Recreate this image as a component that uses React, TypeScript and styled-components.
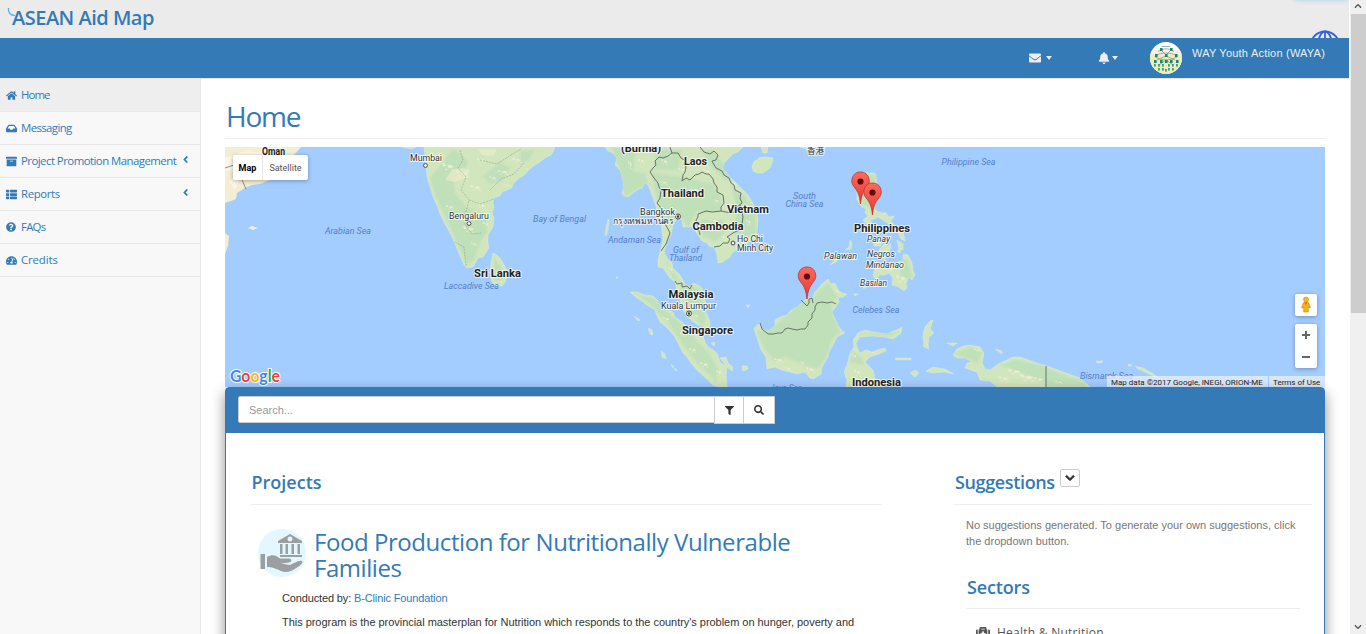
import React from "react";
import styled, { createGlobalStyle } from "styled-components";
import {
  FaHome, FaInbox, FaArchive, FaThList, FaQuestionCircle, FaTachometerAlt, FaEnvelope, FaBell,
  FaFilter, FaSearch, FaMedkit, FaChevronDown, FaChevronUp, FaAngleLeft,
} from "react-icons/fa";

const blue = "#337ab7";
const heading = `"Trebuchet MS", "Open Sans", sans-serif`;
const body = `"Liberation Sans", Arial, sans-serif`;

const Global = createGlobalStyle`
  * { box-sizing: border-box; }
  body { margin: 0; overflow: hidden; background: #fff; font: 11px/16px ${body}; color: #333; }
`;

const Frame = styled.div`
  display: flex;
  width: 1366px;
  height: 634px;
  overflow: hidden;
`;
const Site = styled.div`
  width: 1349px;
  height: 634px;
  overflow: hidden;
`;
const Masthead = styled.header`
  position: relative;
  height: 38px;
  padding: 5px 0 0 12px;
  background: #ebebeb;
  overflow: hidden;
`;
const Brand = styled.div`
  font: 600 20px/26px ${heading};
  letter-spacing: -0.5px;
  color: ${blue};
  white-space: nowrap;
`;
const Swirl = styled.svg`
  position: absolute;
  left: 6px;
  top: 6px;
`;
const Globe = styled.svg`
  position: absolute;
  right: 8px;
  top: 30px;
`;
const Glow = styled.div`
  position: absolute;
  right: 0;
  top: -6px;
  width: 56px;
  height: 6px;
  border-radius: 3px;
  box-shadow: 0 0 5px #a9cfe8;
`;
const TopBar = styled.nav`
  display: flex;
  height: 40px;
  padding-left: 1029px;
  background: ${blue};
  color: #ededed;
`;
const NavButton = styled.div<{ $w: number; $gap: number }>`
  display: flex;
  align-items: center;
  gap: ${(p) => p.$gap}px;
  width: ${(p) => p.$w}px;
  height: 40px;
  font-size: 11px;
`;
const Caret = styled.i`
  border: 3.5px solid transparent;
  border-top: 4px solid currentColor;
  border-bottom: 0;
`;
const Avatar = styled.svg`
  margin: 4px 10px 0 0;
`;
const UserName = styled.div`
  padding-top: 7px;
  letter-spacing: 0.22px;
  white-space: nowrap;
`;
const Columns = styled.div`
  display: flex;
  height: 556px;
`;
const Sidebar = styled.aside`
  width: 201px;
  background: #f8f8f8;
  border-right: 1px solid #e7e7e7;
  border-top: 1px solid #e7e7e7;
`;
const MenuItem = styled.div<{ $active?: boolean }>`
  display: flex;
  align-items: center;
  gap: 4px;
  height: 33px;
  padding: 0 9px 0 6px;
  border-bottom: 1px solid #e7e7e7;
  background: ${(p) => (p.$active ? "#eee" : "transparent")};
  color: ${blue};
  font: 11.4px/18px ${heading};
  white-space: nowrap;
`;
const MenuIcon = styled.span`
  display: flex;
  flex: 0 0 11px;
`;
const MenuText = styled.span<{ $track: number }>`
  flex: 1;
  min-width: 0;
  padding-bottom: 1px;
  letter-spacing: ${(p) => p.$track}px;
`;
const Arrow = styled.span`
  display: flex;
  padding-bottom: 4px;
`;
const Main = styled.main`
  flex: 1;
  padding: 0 24px;
  border-top: 1px solid #e7e7e7;
`;
const PageTitle = styled.h1`
  margin: 0 0 8px;
  height: 60px;
  padding: 19px 0 0 1px;
  border-bottom: 1px solid #eee;
  font: 500 28px/36px ${heading};
  letter-spacing: -1.2px;
  color: ${blue};
`;
const MapFrame = styled.div`
  position: relative;
  height: 240px;
  overflow: hidden;
`;
const MapArt = styled.svg`
  display: block;
`;
const MapTypes = styled.div`
  position: absolute;
  left: 8px;
  top: 8px;
  display: flex;
  height: 25px;
  border-radius: 2px;
  background: #fff;
  box-shadow: 0 1px 4px rgba(0, 0, 0, 0.3);
  font: 9px/26px Roboto, sans-serif;
  white-space: nowrap;
`;
const MapType = styled.div<{ $on?: boolean; $w: number }>`
  width: ${(p) => p.$w}px;
  text-align: center;
  font-weight: ${(p) => (p.$on ? 700 : 400)};
  color: ${(p) => (p.$on ? "#000" : "#565656")};
  border-right: ${(p) => (p.$on ? "1px solid #e8e8e8" : "0")};
`;
const MapControls = styled.div`
  position: absolute;
  right: 8px;
  top: 147px;
  display: flex;
  flex-direction: column;
  gap: 8px;
`;
const MapControl = styled.svg`
  display: block;
  border-radius: 2px;
  background: #fff;
  box-shadow: 0 1px 4px rgba(0, 0, 0, 0.3);
`;
const Attribution = styled.div`
  position: absolute;
  right: 0;
  bottom: 0;
  display: flex;
  gap: 1px;
  font: 8px/11px Roboto, sans-serif;
  color: #222;
  white-space: nowrap;
`;
const Credit = styled.span<{ $w: number }>`
  width: ${(p) => p.$w}px;
  height: 11px;
  padding: 1px 0 0 4px;
  background: rgba(235, 240, 248, 0.75);
`;
const Panel = styled.section`
  position: relative;
  height: 260px;
  border: 1px solid ${blue};
  border-radius: 4px 4px 0 0;
  background: #fff;
  box-shadow: 0 6px 14px rgba(0, 0, 0, 0.45);
`;
const SearchBar = styled.div`
  display: flex;
  height: 45px;
  padding: 8px 0 0 12px;
  background: ${blue};
`;
const SearchField = styled.div`
  width: 477px;
  height: 27px;
  padding: 5px 10px;
  border: 1px solid #ccc;
  border-radius: 2px 0 0 2px;
  background: #fff;
  color: #999;
`;
const SearchButton = styled.div<{ $w: number }>`
  display: flex;
  align-items: center;
  justify-content: center;
  width: ${(p) => p.$w}px;
  height: 28px;
  margin-left: -1px;
  border: 1px solid #ccc;
  background: #fff;
`;
const PanelBody = styled.div`
  display: flex;
  padding: 36px 12px 0 25px;
`;
const Projects = styled.div`
  width: 631px;
  margin-right: 72px;
`;
const Side = styled.div`
  flex: 1;
`;
const SectionTitle = styled.h2<{ $track: number; $inset: number }>`
  display: flex;
  align-items: flex-start;
  gap: 5px;
  margin: 0;
  height: 36px;
  padding-left: ${(p) => p.$inset}px;
  border-bottom: 1px solid #eee;
  font: 600 18px/26px ${heading};
  letter-spacing: ${(p) => p.$track}px;
  color: ${blue};
  white-space: nowrap;
`;
const DropButton = styled.span`
  display: flex;
  align-items: center;
  justify-content: center;
  width: 20px;
  height: 18px;
  border: 1px solid #ccc;
  border-radius: 2px;
  color: #333;
`;
const Project = styled.article`
  display: grid;
  grid-template-columns: 56px 1fr;
  padding: 24px 0 0 7px;
`;
const ProjectTitle = styled.h3`
  margin: 0;
  font: 400 24px/26px ${heading};
  letter-spacing: -0.44px;
  color: ${blue};
  white-space: nowrap;
`;
const ProjectText = styled.p<{ $top: number; $track: number }>`
  grid-column: 1 / -1;
  margin: ${(p) => p.$top}px 0 0 24px;
  letter-spacing: ${(p) => p.$track}px;
  white-space: nowrap;
  color: #333;
`;
const Link = styled.span`
  color: ${blue};
`;
const Hint = styled.p`
  margin: 12px 0 0 12px;
  color: #777;
  white-space: nowrap;
`;
const Sectors = styled.div`
  margin: 24px 12px 0 12px;
`;
const SectorsTitle = styled(SectionTitle)`
  line-height: 28px;
`;
const SectorItem = styled.div`
  display: flex;
  align-items: center;
  gap: 7px;
  padding: 15px 0 0 10px;
  font: 12px/18px ${heading};
  letter-spacing: 0.25px;
  color: #555;
`;
const ScrollTrack = styled.div`
  display: flex;
  flex-direction: column;
  align-items: center;
  justify-content: space-between;
  width: 17px;
  height: 634px;
  padding: 2px 0 3px;
  background: #f0f0f0;
  color: #505050;
  border-left: 1px solid #fff;
`;
const ScrollThumb = styled.div`
  width: 15px;
  height: 299px;
  margin-top: 4px;
  background: #cdcdcd;
`;
const ScrollTop = styled.div`
  display: flex;
  flex-direction: column;
  align-items: center;
`;

const land = [
  "M402 147L412 149L416 147Z",
  "M424 147L426 166L427 177L432 193L434 199L437 205L440 214L443 220L450 233L455 243L458 251L461 258L464 265L467 268L473 267L476 262L478 258L483 257L489 248L488 243L488 235L493 227L494 218L492 213L494 207L493 203L494 198L500 196L502 192L507 190L512 188L513 184L519 178L523 176L530 169L535 165L540 162L545 158L551 155L553 152L555 147Z",
  "M493 253L497 255L500 258L504 265L507 270L507 277L505 282L502 286L497 286L493 283L491 279L490 272L491 262Z",
  "M605 147L608 151L613 153L617 158L615 165L620 170L623 180L624 187L622 193L624 196L628 197L637 190L642 188L645 183L648 185L650 190L653 198L655 203L657 210L660 220L662 230L663 240L660 252L658 260L658 267L663 268L670 278L675 282L677 290L680 300L683 310L687 317L698 325L708 328L710 326L710 322L706 312L705 300L703 290L700 286L693 283L690 287L685 284L680 275L673 268L672 262L667 259L666 256L664 252L668 240L671 235L673 225L677 218L682 220L683 227L693 227L698 235L702 241L707 243L709 246L715 248L717 255L718 263L723 262L730 257L732 253L740 248L753 240L757 235L757 232L758 220L757 212L755 207L748 195L738 185L728 175L723 168L724 163L727 160L733 154L738 152L743 147Z",
  "M752 167L754 161L757 160L760 157L767 157L773 158L772 163L770 168L766 171L763 173L757 173L753 171Z",
  "M761 147L768 147L767 153L763 153Z M800 147L815 147L808 150Z M820 147L826 147L824 149Z",
  "M630 292L637 292L645 295L653 296L657 300L660 305L666 309L673 312L675 317L682 322L690 330L697 335L703 336L705 342L708 347L713 350L717 353L720 362L727 367L726 375L727 387L719 387L713 385L708 380L697 370L691 363L687 357L683 353L680 347L675 337L670 331L667 328L660 322L657 316L655 310L647 305L642 301L637 298Z",
  "M634 316L640 320L638 321Z M648 328L652 330L653 335L650 334Z M661 351L665 354L666 359L662 357Z M671 364L674 367L673 368Z M675 368L677 371L675 370Z",
  "M720 358L726 357L728 363L733 367L732 371L727 367Z M742 366L747 366L748 369L743 371Z M711 343L715 342L714 346Z M746 305L750 305L748 308Z",
  "M608 219L609 220L608 230L606 236L605 234Z M616 277L618 277L617 279Z",
  "M760 323L762 329L768 331L775 326L775 320L780 317L787 315L791 310L797 307L803 302L807 298L813 297L814 293L817 290L822 284L828 279L831 284L835 283L838 290L842 293L847 294L843 297L838 298L839 302L837 305L832 312L838 325L841 330L845 333L837 337L832 347L829 352L828 357L822 367L821 374L813 379L810 378L805 372L797 374L790 372L782 370L775 367L767 369L766 357L761 350L759 344L757 337L755 332L754 328Z",
  "M857 188L856 180L859 174L863 172L869 173L875 173L877 183L878 190L878 197L875 205L875 210L882 213L886 213L889 217L894 216L893 219L890 221L893 223L894 228L889 224L883 220L878 217L872 220L869 217L865 213L866 209L862 207L857 200Z M868 216L872 223L867 225L863 220Z M884 229L889 226L888 233Z",
  "M830 265L838 256L842 254L836 262Z M845 250L849 247L850 240L852 243L851 249Z",
  "M873 236L882 238L881 246L874 246Z M885 243L888 247L882 260L877 257L879 250Z M890 243L891 248L884 260L887 249Z M896 227L903 230L905 241L901 239Z M897 240L903 244L903 250L899 249Z M897 251L901 248L900 253Z",
  "M873 276L875 268L880 266L883 263L889 267L893 265L898 262L903 261L903 254L908 255L912 263L913 270L915 275L912 280L909 277L906 283L907 288L904 291L899 287L892 285L893 278L889 273L885 275L880 275L876 279Z M864 286L867 287L863 289Z M854 294L858 294L855 296Z",
  "M846 387L847 380L844 372L847 365L850 353L854 347L853 340L858 333L865 330L873 332L887 334L893 331L897 330L902 327L901 333L893 339L885 337L873 336L860 337L856 343L857 347L860 353L866 350L872 352L880 349L885 348L886 351L879 354L870 357L865 362L870 367L873 370L875 379L883 387Z",
  "M924 347L923 334L925 327L930 321L933 320L930 329L934 333L929 337L928 344L929 349Z M947 343L957 343L953 346Z",
  "M926 371L933 367L945 369L954 374L944 372L932 373Z M910 373L915 370L919 373L915 377Z M895 358L911 358L911 360L896 360Z M995 349L1002 351L1002 354Z",
  "M953 355L957 349L963 346L970 345L980 347L984 353L982 363L985 369L990 370L994 367L1000 363L1007 360L1013 357L1020 357L1037 363L1050 367L1063 372L1080 378L1090 387L997 387L990 381L980 380L977 372L965 368L967 363L972 362L965 358L957 358Z",
  "M1096 361L1103 361L1101 363L1097 363Z M1135 366L1143 368L1152 373L1160 379L1149 374L1138 369Z M1128 364L1132 365L1129 367Z",
];

const greens = [
  "M452 150L461 153L468 162L463 175L453 178L455 192L466 207L480 212L487 215L487 232L480 242L475 259L467 265L458 245L448 223L442 210L435 196L430 178Z",
  "M500 162L510 168L502 181L490 184L483 176Z M520 151L534 150L530 159L520 164Z",
  "M494 258L501 267L504 275L500 283L494 279Z",
  "M612 147L635 152L634 171L645 174L648 183L637 190L624 197L622 177Z M652 172L668 175L688 178L715 185L722 200L720 212L697 211L688 228L678 212L671 226L663 215L655 192Z",
  "M704 219L723 219L727 230L716 242L704 237L697 224Z M731 186L744 195L756 212L756 233L739 246L733 225L737 212Z",
  "M656 150L682 150L678 170L655 170Z M700 150L715 152L735 180L725 180L712 168Z",
  "M680 284L699 287L703 303L706 318L703 326L689 312Z M667 262L672 270L680 282L672 278Z",
  "M635 293L655 299L670 314L684 326L696 340L708 352L718 368L716 382L698 364L684 346L671 327L653 307Z",
  "M757 332L775 326L798 305L812 297L828 283L838 297L831 302L833 315L840 332L832 339L828 354L819 368L806 366L799 363L786 357L774 361L765 350Z",
  "M864 173L875 176L875 195L870 208L863 205L859 190Z M899 258L908 260L912 277L901 280Z",
  "M860 334L890 336L898 332L875 333Z M852 350L862 358L863 365L850 362Z",
  "M1000 365L1015 360L1040 365L1056 372L1085 382L1085 387L1050 387L1030 376Z M955 354L970 347L982 352L978 363Z",
];

const specks: Array<[number, number, number, number]> = [
  [442, 163, 13, 8], [455, 170, 15, 8], [477, 158, 8, 5], [470, 185, 12, 6], [446, 205, 8, 5], [463, 226, 12, 7],
  [478, 203, 8, 6], [497, 170, 12, 5], [512, 158, 10, 5], [526, 168, 8, 4], [471, 242, 6, 5], [498, 280, 5, 4],
  [638, 159, 7, 5], [659, 181, 9, 4], [678, 168, 9, 4], [703, 169, 8, 5], [690, 188, 9, 4], [714, 199, 5, 4],
  [731, 182, 6, 4], [709, 219, 9, 4], [722, 236, 10, 5], [669, 266, 4, 8], [692, 314, 7, 4], [746, 219, 5, 7],
  [663, 317, 7, 5], [680, 332, 6, 5], [689, 348, 8, 5], [700, 362, 9, 6], [716, 370, 6, 5], [628, 160, 4, 10],
  [661, 159, 7, 6], [667, 154, 6, 3], [489, 176, 8, 5], [503, 184, 7, 3], [483, 222, 6, 5],
  [774, 358, 9, 5], [800, 361, 5, 4], [806, 367, 9, 6], [785, 367, 6, 4], [834, 289, 5, 4],
  [869, 186, 5, 6], [896, 275, 11, 8], [887, 269, 6, 3], [852, 354, 5, 5], [868, 351, 8, 3], [854, 369, 7, 8],
  [1008, 369, 14, 6], [1020, 374, 15, 8], [1034, 377, 10, 6], [998, 376, 12, 6], [974, 349, 7, 3], [1055, 381, 8, 3],
];

const borders = [
  "M670 147L672 153L668 156L663 158L659 157L655 161L656 165L653 168L650 172L654 178L658 183L659 187L661 190L660 198L657 203L661 208L661 213L664 222L668 229L670 233L666 244L661 251",
  "M672 153L678 153L681 158L686 161L684 164L686 167L685 172L683 175L682 181L686 178L690 180L695 175L699 174L702 172L706 174L709 174L713 179L714 183L717 187L717 192L723 195L724 203L721 207L721 211L712 212L706 211L698 214L698 217L696 220L697 224L698 227L700 235",
  "M700 147L704 152L710 154L714 151L718 155L716 160L712 161L713 163L716 168L722 171L724 175L729 178L731 183L734 185L735 190L741 193L740 198L742 203L737 207L737 211L731 213L721 211",
  "M740 205L742 212L743 217L742 224L741 229L733 233L727 237L730 239L728 243L723 243L720 246L714 247",
  "M675 281L677 284L682 283L682 287L687 286L690 289L692 285",
  "M760 323L762 329L768 334L773 334L778 333L782 333L785 329L788 328L792 329L797 330L801 329L805 329L808 325L808 322L812 318L812 314L815 310L815 307L817 303L822 302L827 303L832 302L836 304",
  "M801 300L804 303L807 306L809 303L809 299L812 298L813 303", "M1046 366L1046 387",
];

type Label = [string, number, number, number, "c" | "p" | "s" | "i"];
const labels: Label[] = [
  ["Oman", 262, 155, 23, "c"], ["Mumbai", 410, 161, 32, "p"], ["Bengaluru", 449, 219, 40, "p"],
  ["Arabian Sea", 325, 233.500, 46, "s"], ["Bay of Bengal", 533, 221.500, 53, "s"], ["Sri Lanka", 474, 277, 47, "c"],
  ["Laccadive Sea", 444, 288.500, 55, "s"], ["(Burma)", 621, 152, 40, "c"], ["Laos", 684, 165, 23, "c"],
  ["Thailand", 661, 197, 43, "c"], ["Bangkok", 640, 215, 35, "p"], ["กรุงเทพมหานคร", 613, 223.500, 61, "p"],
  ["Vietnam", 727, 213, 42, "c"], ["Cambodia", 692.500, 230, 51, "c"], ["Ho Chi", 737, 242, 26, "p"],
  ["Minh City", 737, 251, 36, "p"], ["Andaman Sea", 608, 242.500, 53, "s"], ["Gulf of", 673, 252.500, 26, "s"],
  ["Thailand", 669, 260.500, 33, "s"], ["Malaysia", 668.500, 297.500, 45, "c"], ["Kuala Lumpur", 661, 308.500, 55, "p"],
  ["Singapore", 682, 334, 51, "c"], ["香港", 807, 154, 17, "p"], ["South", 793, 198.500, 23, "s"],
  ["China Sea", 785.500, 207, 38, "s"], ["Philippine Sea", 941.500, 165, 54, "s"], ["Philippines", 854, 232, 56, "c"],
  ["Panay", 867, 241.500, 23, "i"], ["Negros", 867, 256.500, 28, "i"], ["Mindanao", 866, 268, 38, "i"],
  ["Palawan", 824, 259, 33, "i"], ["Basilan", 860, 285.500, 27, "i"], ["Celebes Sea", 852.500, 312.500, 47, "s"],
  ["Indonesia", 852, 386, 49, "c"], ["Bismarck Sea", 1080, 379, 53, "s"], ["Java Sea", 770, 391, 32, "s"],
];
const labelStyle = {
  c: { size: 11, fill: "#222", weight: 700, style: "normal", halo: "#fff" },
  p: { size: 8.8, fill: "#333", weight: 400, style: "normal", halo: "#fff" },
  s: { size: 8.8, fill: "#5581c9", weight: 400, style: "italic", halo: "none" },
  i: { size: 8.8, fill: "#2f3c3c", weight: 400, style: "italic", halo: "#fff" },
};

const Pin = ({ x, y }: { x: number; y: number }) => (
  <g transform={`translate(${x} ${y})`}>
    <path d="M0 0C-1-9-2.500-12-5.500-16C-9-20-9-23-8.500-25C-7-31-3-32-0-32C4-32 7.500-30 8.500-25C9-22 9-20 5.500-16C2.500-12 1-9 0 0Z" fill="url(#pin)" stroke="#b8352d" strokeWidth="0.8" />
    <circle cy="-22.500" r="3.100" fill="#5c0f0b" />
  </g>
);

const WorldMap = () => (
  <MapArt width="1100" height="240" viewBox="225 147 1100 240">
    <defs>
      <linearGradient id="pin" x1="0" y1="0" x2="0" y2="1">
        <stop offset="0" stopColor="#fb6a60" />
        <stop offset="1" stopColor="#e8382f" />
      </linearGradient>
      <clipPath id="coast"><path d={land.join("")} /></clipPath>
    </defs>
    <rect x="225" y="147" width="1100" height="240" fill="#a3ccff" />
    <path d="M225 147H301L296 153L290 158L285 168L270 180L260 184L252 185L245 188L237 193L236 199L231 201L225 203Z" fill="#f3eed2" />
    <path d="M225 158L245 151L268 153L250 164L239 170L225 171Z M229 181L240 177L235 190Z" fill="#fbf6e5" />
    <path d="M225 168L234 165M242 180L246 189" stroke="#777" strokeWidth="0.8" />
    <path d="M248 228L252 226L258 228L253 230Z M225 233L229 236L228 246L225 254Z" fill="#f3eed2" />
    <path d={land.join("")} fill="#d2e6be" stroke="#dcecd0" strokeWidth="0.5" />
    <g clipPath="url(#coast)">
      <path d={greens.join("")} fill="#bfe0b9" stroke="#c9e3bc" strokeWidth="2" strokeLinejoin="round" />
      {specks.map(([x, y, w, h], i) => (
        <path key={i} fill="#edecd2" opacity="0.9" d={`M${x} ${y}l${w * 0.25} ${h * 0.1}l${w * 0.05} ${h * 0.25}l${-w * 0.2} ${h * 0.1}ZM${x + w * 0.4} ${y + h * 0.3}l${w * 0.2} ${-h * 0.1}l${w * 0.3} ${h * 0.2}l${-w * 0.1} ${h * 0.2}l${-w * 0.3} ${h * 0.1}ZM${x + w * 0.2} ${y + h * 0.7}l${w * 0.25} ${h * 0.05}l${-w * 0.1} ${h * 0.2}ZM${x + w * 0.75} ${y + h * 0.75}l${w * 0.25} ${h * 0.1}l${-w * 0.2} ${h * 0.15}Z`} />
      ))}
      <path d="M445 180L452 170L462 168L470 170L466 178L455 182Z M478 149L497 149L493 156L482 155Z" fill="#ecebc9" opacity="0.7" />
      <path d="M460 150L463 160L458 168L466 177L461 190L469 200L466 212L457 219M469 200L480 204L494 199M464 223L472 234L482 233M455 242L464 247L466 266M480 160L497 164L511 155L521 149M490 190L501 179L514 174L524 163" fill="none" stroke="#98a58a" strokeWidth="0.6" strokeDasharray="2 1" />
    </g>
    <g fill="none" stroke="#69726a" strokeWidth="1">{borders.map((d) => <path key={d} d={d} />)}</g>
    <g fill="#fff" stroke="#444" strokeWidth="1">
      <circle cx="425.500" cy="165.500" r="1.900" /><circle cx="469" cy="223.500" r="1.900" /><circle cx="733" cy="243" r="1.900" />
      <circle cx="678" cy="216.500" r="2.500" /><circle cx="689" cy="313.500" r="2.500" />
    </g>
    <circle cx="678" cy="216.500" r="1.200" fill="#333" /><circle cx="689" cy="313.500" r="1.200" fill="#333" />
    {labels.map(([text, x, y, w, kind]) => {
      const s = labelStyle[kind];
      return (
        <text key={text + x} x={x} y={y} textLength={w} lengthAdjust="spacingAndGlyphs" fontFamily={`Roboto, "Noto Sans CJK SC", sans-serif`} fontSize={s.size} fontWeight={s.weight} fontStyle={s.style} fill={s.fill} stroke={s.halo} strokeOpacity="0.75" strokeWidth="2" strokeLinejoin="round" paintOrder="stroke">{text}</text>
      );
    })}
    <Pin x={860.500} y={204} /><Pin x={872.500} y={215} /><Pin x={807} y={299} />
    <text x="230" y="381.500" textLength="50" lengthAdjust="spacingAndGlyphs" fontFamily="Lato, sans-serif" fontSize="17" fontWeight="700" stroke="#fff" strokeWidth="2" paintOrder="stroke">
      <tspan fill="#4285f4">G</tspan><tspan fill="#ea4335">o</tspan><tspan fill="#fbbc05">o</tspan><tspan fill="#4285f4">g</tspan><tspan fill="#34a853">l</tspan><tspan fill="#ea4335">e</tspan>
    </text>
  </MapArt>
);

const menu = [
  { icon: <FaHome size={11} />, text: "Home", track: -0.9, active: true },
  { icon: <FaInbox size={11} />, text: "Messaging", track: -0.6 },
  { icon: <FaArchive size={11} />, text: "Project Promotion Management", track: -0.53, sub: true },
  { icon: <FaThList size={11} />, text: "Reports", track: -0.38, sub: true },
  { icon: <FaQuestionCircle size={10} />, text: "FAQs", track: -0.75 },
  { icon: <FaTachometerAlt size={11} />, text: "Credits", track: -0.12 },
];

export default function App() {
  return (
    <Frame>
      <Global />
      <Site>
        <Masthead>
          <Swirl width="12" height="13" viewBox="0 0 12 13"><path d="M2.500 2C2 6 4 9.500 9 9.500" fill="none" stroke="#58b8e8" strokeWidth="1.400" /></Swirl>
          <Brand>ASEAN Aid Map</Brand>
          <Glow />
          <Globe width="32" height="32" viewBox="0 0 32 32" fill="none" stroke="#2f62e6" strokeWidth="1.800">
            <circle cx="16" cy="16" r="14.500" /><ellipse cx="16" cy="16" rx="7" ry="14.500" /><path d="M16 1V31" />
          </Globe>
        </Masthead>
        <TopBar>
          <NavButton $w={69} $gap={5}><FaEnvelope size={12} /><Caret /></NavButton>
          <NavButton $w={52} $gap={2}><FaBell size={12} /><Caret /></NavButton>
          <Avatar width="32" height="32" viewBox="0 0 32 32">
            <defs><clipPath id="face"><circle cx="16" cy="16" r="16" /></clipPath></defs>
            <g clipPath="url(#face)">
              <rect width="32" height="32" fill="#fff" /><rect y="8" width="32" height="5" fill="#fdeee2" /><rect y="13" width="32" height="19" fill="#efedb4" />
              <path d="M12 4.500H20M8 9.500Q16 4 24 9.500M5 15Q16 21 27 15M6 13Q16 9 26 13M11 8L16 13L21 8M7 18L16 14L25 18M9 23L16 18L23 23" stroke="#8e978c" strokeWidth="0.8" fill="none" />
              <g fill="#12897b">
                {[[10, 6], [20, 6], [5, 12], [15, 12], [25, 12], [4, 18], [10, 18], [15, 18], [20, 18], [26, 18]].map(([x, y]) => (
                  <rect key={`${x}-${y}`} x={x} y={y} width="2.600" height="3" />
                ))}
                {[[8, 22], [12, 22], [18, 22], [22, 22], [8, 26], [12, 26], [15, 27], [18, 26], [22, 26], [4, 22], [26, 22]].map(([x, y]) => (
                  <rect key={`${x}-${y}`} x={x} y={y} width="1.800" height="2.600" opacity="0.8" />
                ))}
              </g>
            </g>
          </Avatar>
          <UserName>WAY Youth Action (WAYA)</UserName>
        </TopBar>
        <Columns>
          <Sidebar>
            {menu.map((m) => (
              <MenuItem key={m.text} $active={m.active}>
                <MenuIcon>{m.icon}</MenuIcon>
                <MenuText $track={m.track}>{m.text}</MenuText>
                {m.sub && <Arrow><FaAngleLeft size={11} /></Arrow>}
              </MenuItem>
            ))}
          </Sidebar>
          <Main>
            <PageTitle>Home</PageTitle>
            <MapFrame>
              <WorldMap />
              <MapTypes><MapType $on $w={30}>Map</MapType><MapType $w={45}>Satellite</MapType></MapTypes>
              <MapControls>
                <MapControl width="22" height="22" viewBox="0 0 22 22">
                  <path d="M8.500 8.500H13.500L15.500 13.500L14 14L13.300 12.500V18H8.700V12.500L8 14L6.500 13.500Z" fill="#f6b21b" stroke="#c98a12" strokeWidth="0.600" />
                  <circle cx="11" cy="5.500" r="2.500" fill="#f8b820" stroke="#c98a12" strokeWidth="0.600" />
                  <path d="M9.500 8.500H12.500L11 11Z" fill="#e0681c" />
                </MapControl>
                <MapControl width="22" height="44" viewBox="0 0 22 44"><path d="M7 11H15M11 7V15M7 33H15" stroke="#666" strokeWidth="2" /></MapControl>
              </MapControls>
              <Attribution><Credit $w={161}>Map data ©2017 Google, INEGI, ORION-ME</Credit><Credit $w={56}>Terms of Use</Credit></Attribution>
            </MapFrame>
            <Panel>
              <SearchBar>
                <SearchField>Search...</SearchField>
                <SearchButton $w={30}><FaFilter size={9} /></SearchButton>
                <SearchButton $w={32}><FaSearch size={10} /></SearchButton>
              </SearchBar>
              <PanelBody>
                <Projects>
                  <SectionTitle $track={0} $inset={0.5}>Projects</SectionTitle>
                  <Project>
                    <svg width="48" height="48" viewBox="0 0 48 48">
                      <circle cx="24" cy="24" r="24" fill="#e3f8fe" />
                      <g fill="#9a9fa2">
                        <path fillRule="evenodd" d="M20 12L32 5L44 12V14H20ZM32 7.500a2.500 2.500 0 1 0 .01 0Z" />
                        <path d="M22 15H24.500V25H22ZM27.500 15H30V25H27.500ZM33.500 15H36V25H33.500ZM39.500 15H42V25H39.500ZM22 26H44V28H22Z" />
                        <path d="M2.500 25H7V40H2.500ZM9 28C14 25 18 26 22 29.500H31C34 30 34 33 31 33.500L23 34.500L32 36C37 34 40 31 44 32C45.500 33.500 43 36 39 38.500C34 42 29 44.500 23 42C17 39.500 14 38 9 38Z" />
                      </g>
                    </svg>
                    <ProjectTitle>Food Production for Nutritionally Vulnerable<br />Families</ProjectTitle>
                    <ProjectText $top={9} $track={-0.14}>Conducted by: <Link>B-Clinic Foundation</Link></ProjectText>
                    <ProjectText $top={8} $track={-0.035}>This program is the provincial masterplan for Nutrition which responds to the country's problem on hunger, poverty and</ProjectText>
                  </Project>
                </Projects>
                <Side>
                  <SectionTitle $track={-0.36} $inset={1}>Suggestions<DropButton><FaChevronDown size={10} stroke="#333" strokeWidth={40} /></DropButton></SectionTitle>
                  <Hint>No suggestions generated. To generate your own suggestions, click<br />the dropdown button.</Hint>
                  <Sectors>
                    <SectorsTitle $track={-0.15} $inset={1}>Sectors</SectorsTitle>
                    <SectorItem><FaMedkit size={14} />Health &amp; Nutrition</SectorItem>
                  </Sectors>
                </Side>
              </PanelBody>
            </Panel>
          </Main>
        </Columns>
      </Site>
      <ScrollTrack>
        <ScrollTop><FaChevronUp size={8} /><ScrollThumb /></ScrollTop>
        <FaChevronDown size={8} />
      </ScrollTrack>
    </Frame>
  );
}
